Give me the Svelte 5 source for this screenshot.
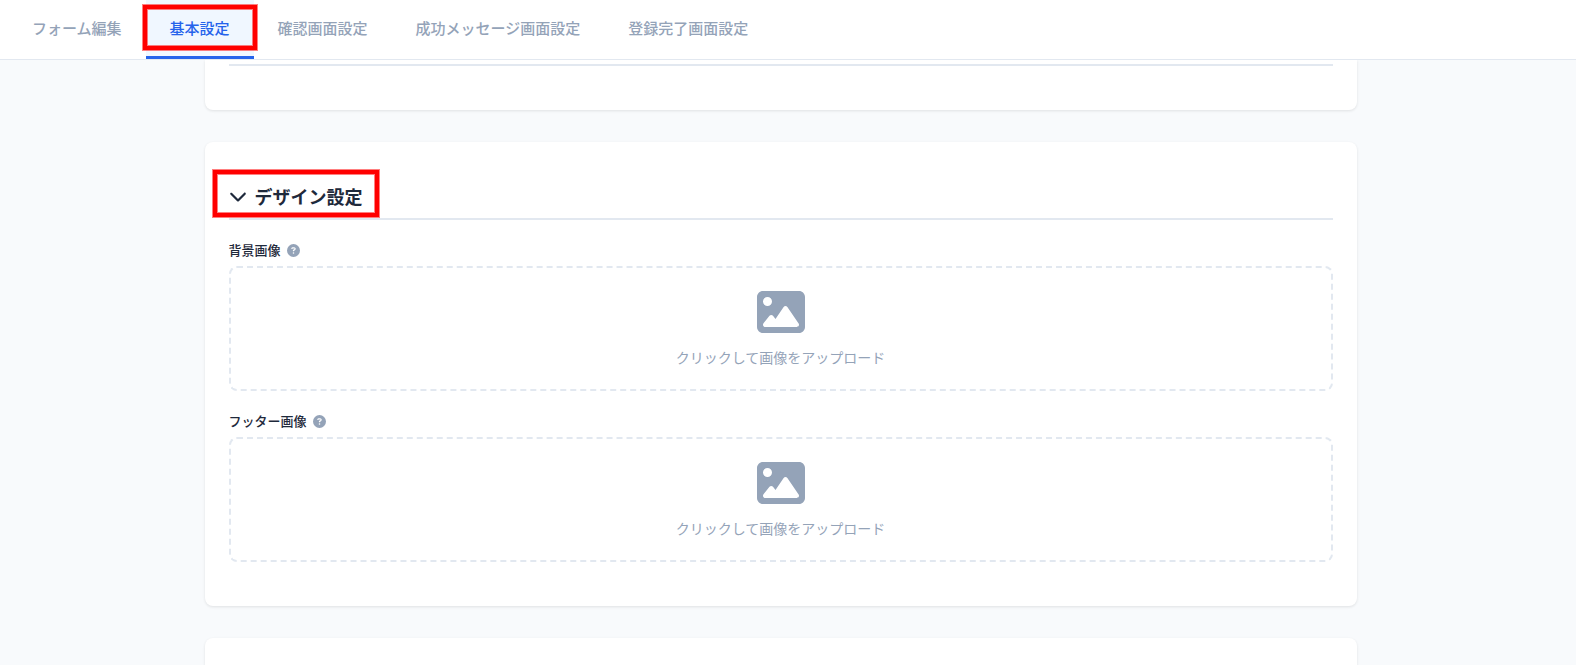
<script lang="ts">
    type Tab = { id: string; label: string };
    type ImageField = { id: string; label: string };

    const tabs: Tab[] = [
        { id: 'edit', label: 'フォーム編集' },
        { id: 'basic', label: '基本設定' },
        { id: 'confirm', label: '確認画面設定' },
        { id: 'success', label: '成功メッセージ画面設定' },
        { id: 'complete', label: '登録完了画面設定' },
    ];

    const imageFields: ImageField[] = [
        { id: 'background-image', label: '背景画像' },
        { id: 'footer-image', label: 'フッター画像' },
    ];

    let activeTab = $state('basic');
    let designOpen = $state(true);
</script>

<div class="app">
    <nav class="tabs">
        {#each tabs as tab (tab.id)}
            <button
                type="button"
                class="tab"
                class:active={activeTab === tab.id}
                onclick={() => (activeTab = tab.id)}
            >
                {tab.label}
                {#if tab.id === 'basic'}
                    <span class="marker tab-marker"></span>
                {/if}
            </button>
        {/each}
    </nav>

    <main class="content">
        <section class="card card-above">
            <div class="divider"></div>
        </section>

        <section class="card">
            <h2 class="section-title">
                <button
                    type="button"
                    class="section-toggle"
                    class:closed={!designOpen}
                    aria-expanded={designOpen}
                    onclick={() => (designOpen = !designOpen)}
                >
                    <svg class="chevron" viewBox="0 0 512 512" aria-hidden="true">
                        <path d="M233.4 406.6c12.5 12.5 32.8 12.5 45.3 0l192-192c12.5-12.5 12.5-32.8 0-45.3s-32.8-12.5-45.3 0L256 338.7 86.6 169.4c-12.5-12.5-32.8-12.5-45.3 0s-12.5 32.8 0 45.3l192 192z" />
                    </svg>
                    デザイン設定
                    <span class="marker title-marker"></span>
                </button>
            </h2>

            {#if designOpen}
                {#each imageFields as field (field.id)}
                    <div class="field">
                        <div class="field-label">
                            <span id={field.id}>{field.label}</span>
                            <button type="button" class="help" aria-describedby={field.id}>
                                <svg viewBox="0 0 512 512" aria-hidden="true">
                                    <path d="M256 512A256 256 0 1 0 256 0a256 256 0 1 0 0 512zM169.8 165.3c7.9-22.3 29.1-37.3 52.8-37.3h58.3c34.9 0 63.1 28.3 63.1 63.1c0 22.6-12.1 43.5-31.7 54.8L280 264.4c-.2 13-10.9 23.6-24 23.6c-13.3 0-24-10.7-24-24V250.5c0-8.6 4.6-16.5 12.1-20.8l44.3-25.4c4.7-2.7 7.6-7.7 7.6-13.1c0-8.4-6.8-15.1-15.1-15.1H222.6c-3.4 0-6.4 2.1-7.5 5.3l-.4 1.2c-4.4 12.5-18.2 19-30.6 14.6s-19-18.2-14.6-30.6l.4-1.2zM224 352a32 32 0 1 1 64 0 32 32 0 1 1-64 0z" />
                                </svg>
                            </button>
                        </div>

                        <button type="button" class="upload" aria-describedby={field.id}>
                            <svg class="picture" viewBox="0 0 512 512" aria-hidden="true">
                                <path d="M0 96C0 60.7 28.7 32 64 32H448c35.3 0 64 28.7 64 64V416c0 35.3-28.7 64-64 64H64c-35.3 0-64-28.7-64-64V96zM323.8 202.5c-4.5-6.6-11.9-10.5-19.8-10.5s-15.4 3.9-19.8 10.5l-87 127.6L170.7 297c-4.6-5.7-11.5-9-18.7-9s-14.2 3.3-18.7 9l-64 80c-5.8 7.2-6.9 17.1-2.9 25.4s12.4 13.6 21.6 13.6h96 32H424c8.9 0 17.1-4.9 21.2-12.8s3.6-17.4-1.4-24.7l-120-176zM112 192a48 48 0 1 0 0-96 48 48 0 1 0 0 96z" />
                            </svg>
                            <span>クリックして画像をアップロード</span>
                        </button>
                    </div>
                {/each}
            {/if}
        </section>

        <section class="card card-below"></section>
    </main>
</div>

<style>
    :global(body) {
        margin: 0;
        background: #f8fafc;
        color: #1e293b;
        font-family: "Noto Sans CJK JP", "Noto Sans", sans-serif;
    }

    button {
        margin: 0;
        padding: 0;
        border: none;
        background: none;
        color: inherit;
        font: inherit;
        cursor: pointer;
    }

    svg {
        display: block;
        fill: currentColor;
    }

    .app {
        display: flex;
        flex-direction: column;
        height: 100vh;
        overflow: hidden;
    }

    .tabs {
        display: flex;
        flex-shrink: 0;
        padding: 0 8px;
        background: #fff;
        border-bottom: 1px solid #e2e8f0;
    }

    .tab {
        position: relative;
        padding: 16px 24px;
        border-bottom: 3px solid transparent;
        color: #94a3b8;
        font-size: 15px;
        font-weight: 500;
        line-height: 24px;
        white-space: nowrap;
    }

    .tab.active {
        background: #f0f7ff;
        border-bottom-color: #2563eb;
        color: #2563eb;
    }

    /* Red frames that point at the menu path */
    .marker {
        position: absolute;
        border: 4px solid #f00;
        box-shadow: 0 0 0 1px rgba(255, 0, 0, 0.5), inset 0 0 0 1px rgba(255, 0, 0, 0.5);
        pointer-events: none;
    }

    .tab-marker {
        inset: 5px -3px 6px;
    }

    .title-marker {
        inset: -12px -16px -7px;
    }

    .content {
        display: flex;
        flex: 1;
        flex-direction: column;
        gap: 32px;
        box-sizing: border-box;
        width: 100%;
        min-height: 0;
        padding: 0 39px 0 24px;
        overflow: hidden;
    }

    .card {
        flex-shrink: 0;
        align-self: center;
        box-sizing: border-box;
        width: 100%;
        max-width: 1152px;
        padding: 24px;
        background: #fff;
        border-radius: 8px;
        box-shadow: 0 1px 3px rgba(0, 0, 0, 0.1);
    }

    .card-above {
        padding-top: 4px;
        border-radius: 0 0 8px 8px;
    }

    .card-below {
        flex: 1 0 0;
        padding: 0;
        border-radius: 8px 8px 0 0;
    }

    .divider {
        margin-bottom: 20px;
        border-bottom: 2px solid #e2e8f0;
    }

    .section-title {
        display: flex;
        margin: 0 0 20px;
        padding: 16px 0 8px;
        border-bottom: 2px solid #e2e8f0;
        font-size: 18px;
        font-weight: 700;
        line-height: 28px;
    }

    .section-toggle {
        position: relative;
        display: flex;
        align-items: center;
        gap: 8px;
    }

    .chevron {
        width: 18px;
        height: 18px;
    }

    .closed .chevron {
        transform: rotate(-90deg);
    }

    .field {
        margin-bottom: 20px;
    }

    .field-label {
        display: flex;
        align-items: center;
        gap: 6px;
        margin-bottom: 6px;
        font-size: 13px;
        font-weight: 500;
        line-height: 20px;
    }

    .help {
        color: #94a3b8;
    }

    .help svg {
        width: 13px;
        height: 13px;
    }

    .upload {
        display: flex;
        flex-direction: column;
        align-items: center;
        gap: 10px;
        box-sizing: border-box;
        width: 100%;
        padding: 20px;
        border: 2px dashed #e2e8f0;
        border-radius: 8px;
        color: #94a3b8;
        font-size: 14px;
        line-height: 23px;
    }

    .upload:hover {
        border-color: #2563eb;
    }

    .picture {
        width: 48px;
        height: 48px;
    }
</style>
